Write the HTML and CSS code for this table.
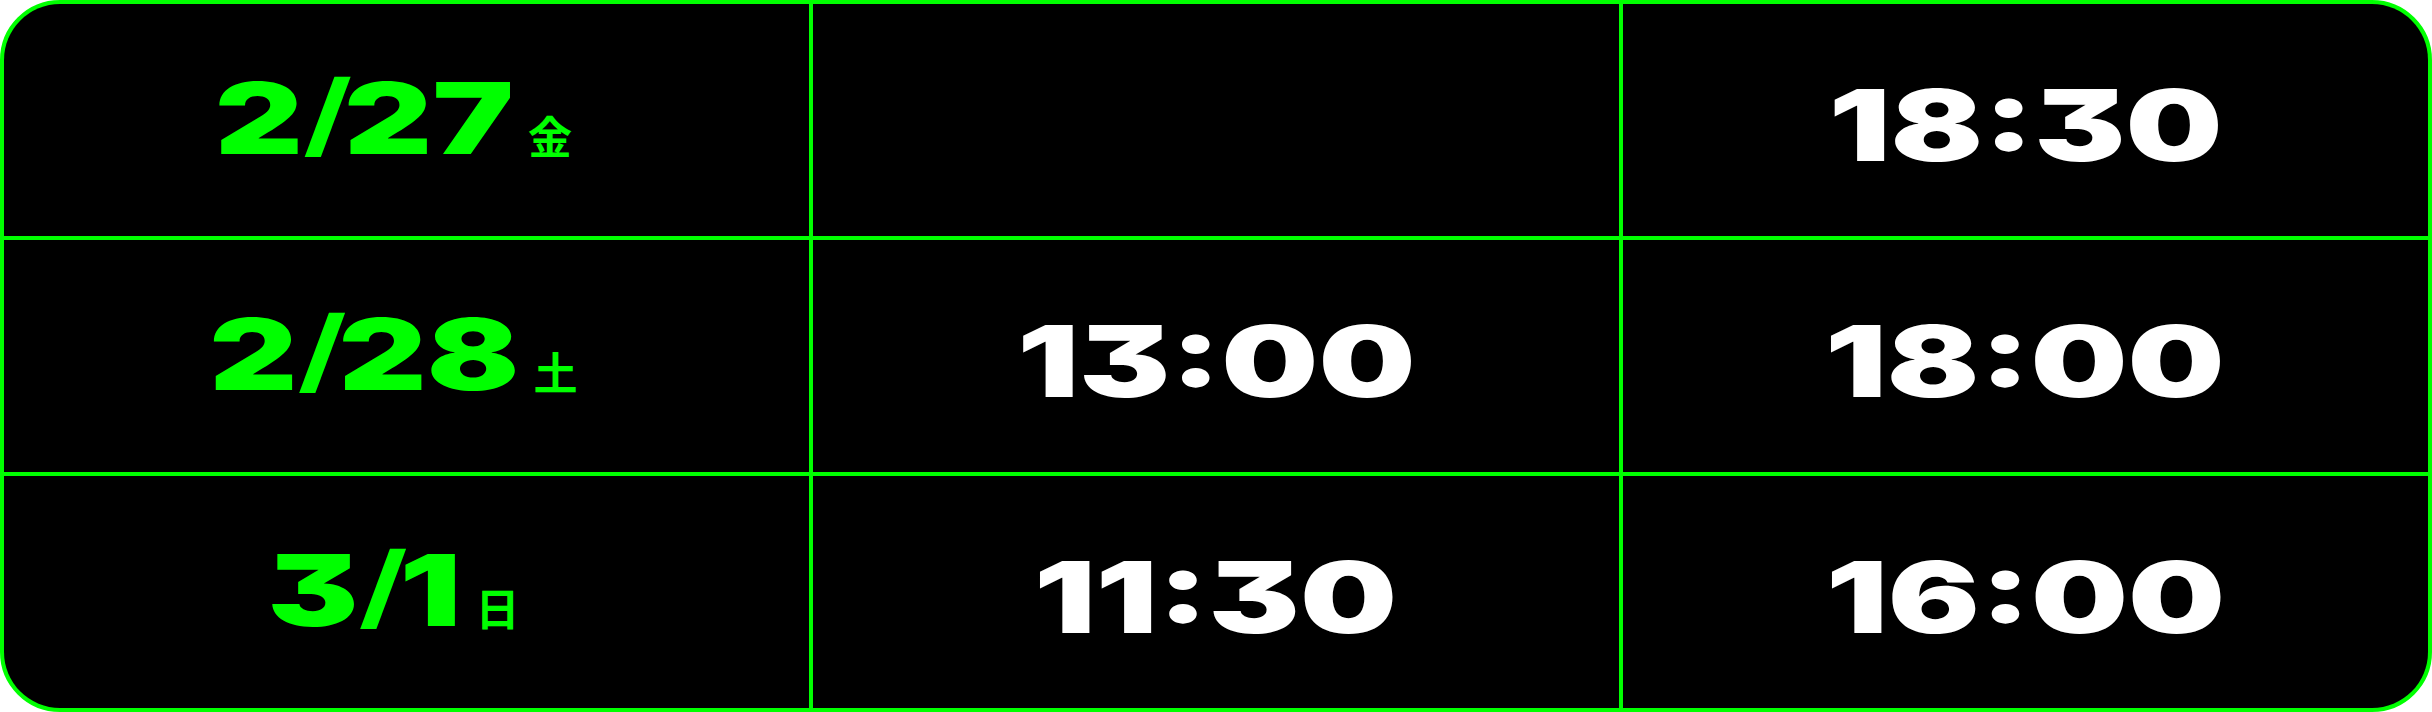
FILE: index.html
```html
<!DOCTYPE html>
<html lang="ja">
<head>
<meta charset="utf-8">
<title>Schedule</title>
<link rel="stylesheet" href="styles.css">
</head>
<body>
<div class="schedule">
  <div class="cell date"><span class="txt">2<span class="sl">/</span>27<span class="wd">金</span></span></div>
  <div class="cell time"></div>
  <div class="cell time"><span class="txt">18:30</span></div>

  <div class="cell date"><span class="txt">2<span class="sl">/</span>28<span class="wd">土</span></span></div>
  <div class="cell time"><span class="txt">13:00</span></div>
  <div class="cell time"><span class="txt">18:00</span></div>

  <div class="cell date"><span class="txt">3<span class="sl">/</span>1<span class="wd">日</span></span></div>
  <div class="cell time"><span class="txt">11:30</span></div>
  <div class="cell time"><span class="txt">16:00</span></div>
</div>
</body>
</html>
```

FILE: styles.css
```css
html, body {
  margin: 0;
  padding: 0;
  background: #ffffff;
}

.schedule {
  width: 2432px;
  height: 712px;
  box-sizing: border-box;
  border: 4px solid #00ff00;
  border-radius: 60px;
  background: #00ff00;
  overflow: hidden;
  display: grid;
  grid-template-columns: repeat(3, 1fr);
  grid-template-rows: repeat(3, 1fr);
  gap: 4px;
}

.cell {
  background: #000000;
  display: flex;
  align-items: center;
  justify-content: center;
}

.txt {
  display: inline-block;
  font-family: Inter, "Noto Sans", sans-serif;
  font-weight: 900;
  font-size: 99px;
  line-height: 1;
  font-feature-settings: "cv09" 1;
  transform: scaleX(1.38);
  white-space: nowrap;
}

.date {
  padding-right: 18px;
}

.date .txt {
  color: #00ff00;
  margin-bottom: 4px;
}

.time .txt {
  color: #ffffff;
  margin-top: 10px;
}

.sl {
  font-weight: 700;
  font-size: 92px;
  letter-spacing: -6px;
  vertical-align: 7px;
}

.wd {
  display: inline-block;
  font-family: "Noto Sans CJK JP", sans-serif;
  font-weight: 700;
  font-size: 44px;
  margin-left: 4px;
  transform: scaleX(0.725);
}
```
